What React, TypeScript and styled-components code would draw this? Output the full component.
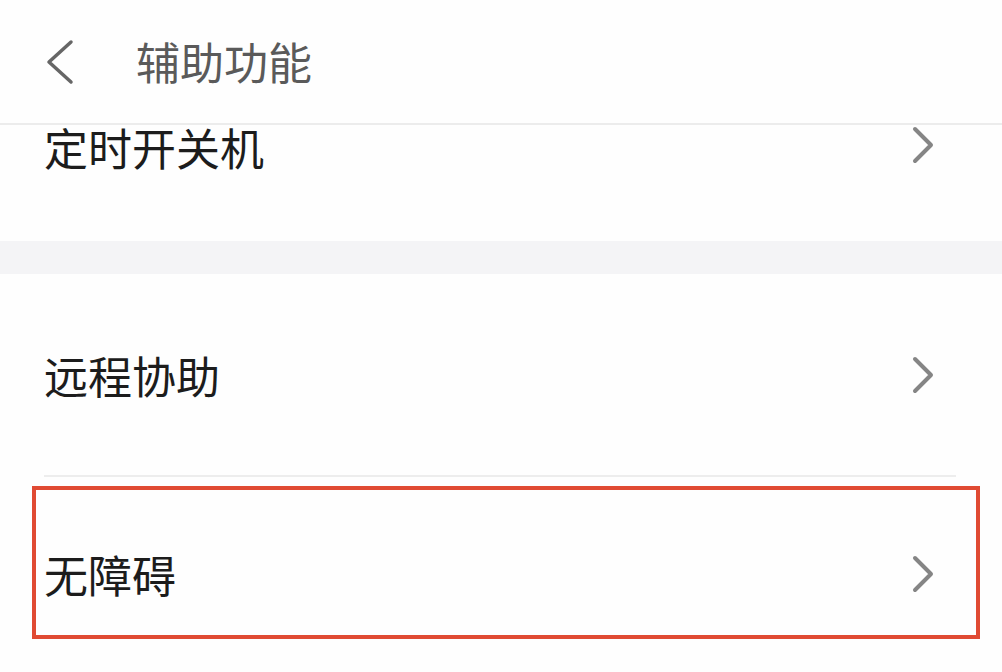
import styled, { createGlobalStyle } from 'styled-components'

const Global = createGlobalStyle`
  html, body {
    margin: 0;
    padding: 0;
    background: #fefefe;
  }
  body {
    font-family: "Noto Sans CJK SC", "Noto Sans", sans-serif;
  }
`

const Page = styled.div`
  width: 1002px;
  height: 672px;
  overflow: hidden;
  background: #fefefe;
  display: flex;
  flex-direction: column;
`

const Header = styled.div`
  height: 125px;
  flex-shrink: 0;
  display: flex;
  align-items: center;
  padding: 0 0 0 44px;
  border-bottom: 2px solid #ececec;
  box-sizing: border-box;
  gap: 62px;
`

const Title = styled.div`
  font-size: 44px;
  line-height: 1;
  color: #5a5a5a;
  margin-top: -2px;
`

const Row = styled.div<{ $height: number; $top?: boolean }>`
  position: relative;
  height: ${p => p.$height}px;
  flex-shrink: 0;
  display: flex;
  justify-content: space-between;
  align-items: ${p => (p.$top ? 'flex-start' : 'center')};
  padding: 0 68px 0 44px;
  box-sizing: border-box;
`

const Label = styled.div`
  font-size: 44px;
  line-height: 44px;
  color: #1c1c1c;
`

const Band = styled.div`
  height: 33px;
  flex-shrink: 0;
  background: #f4f4f6;
`

const Divider = styled.div`
  height: 2px;
  margin: 0 46px 0 44px;
  background: #ededed;
  flex-shrink: 0;
`

const Highlight = styled.div`
  position: absolute;
  top: 9px;
  left: 32px;
  width: 948px;
  height: 153px;
  border: 4px solid #e04a33;
  box-sizing: border-box;
  pointer-events: none;
`

const Back = () => (
  <svg width="30" height="46" viewBox="0 0 30 46">
    <path d="M27 3 L5 23 L27 43" fill="none" stroke="#666" strokeWidth="3.5" strokeLinecap="round" strokeLinejoin="round" />
  </svg>
)

const Chevron = ({ offset = 0 }: { offset?: number }) => (
  <svg width="22" height="38" viewBox="0 0 22 38" style={{ marginTop: offset }}>
    <path d="M3 3 L19 19 L3 35" fill="none" stroke="#858585" strokeWidth="4" strokeLinecap="round" strokeLinejoin="round" />
  </svg>
)

export default function App() {
  return (
    <Page>
      <Global />
      <Header>
        <Back />
        <Title>辅助功能</Title>
      </Header>
      <Row $height={116} $top>
        <Label>定时开关机</Label>
        <Chevron offset={1} />
      </Row>
      <Band />
      <Row $height={201}>
        <Label>远程协助</Label>
        <Chevron />
      </Row>
      <Divider />
      <Row $height={194}>
        <Label>无障碍</Label>
        <Chevron />
        <Highlight />
      </Row>
    </Page>
  )
}
